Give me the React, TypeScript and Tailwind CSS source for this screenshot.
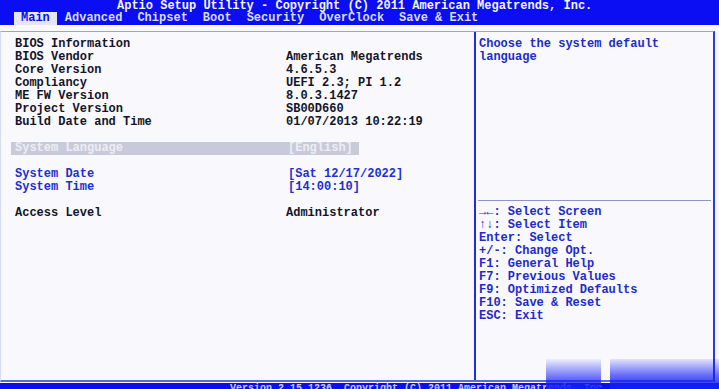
import React from "react";

const info: [string, string][] = [
  ["BIOS Information", ""],
  ["BIOS Vendor", "American Megatrends"],
  ["Core Version", "4.6.5.3"],
  ["Compliancy", "UEFI 2.3; PI 1.2"],
  ["ME FW Version", "8.0.3.1427"],
  ["Project Version", "SB00D660"],
  ["Build Date and Time", "01/07/2013 10:22:19"],
];

const keys = [
  "→←: Select Screen",
  "↑↓: Select Item",
  "Enter: Select",
  "+/-: Change Opt.",
  "F1: General Help",
  "F7: Previous Values",
  "F9: Optimized Defaults",
  "F10: Save & Reset",
  "ESC: Exit",
];

const tabs = ["Advanced", "Chipset", "Boot", "Security", "OverClock", "Save & Exit"];

function Row({ label, value, cls = "text-[#141428]" }: { label: string; value: string; cls?: string }) {
  return (
    <div className={`flex h-[13px] leading-[13px] whitespace-pre ${cls}`}>
      <div className="w-[271px]">{label}</div>
      <div>{value}</div>
    </div>
  );
}

export default function App() {
  return (
    <div
      className="relative w-[719px] h-[389px] overflow-hidden bg-[#f9f9fd] text-[12px] font-bold"
      style={{ fontFamily: '"Liberation Mono", "DejaVu Sans Mono", monospace' }}
    >
      {/* header */}
      <div className="h-[25px] bg-[#0b0df3] text-white">
        <div className="h-[12px] leading-[12px] pl-[117px] whitespace-pre text-[#f4f4ff]">
          Aptio Setup Utility - Copyright (C) 2011 American Megatrends, Inc.
        </div>
        <div className="h-[13px] leading-[13px] flex pl-[14px] whitespace-pre">
          <div className="bg-[#e4e6f2] text-[#0b0df3] px-[7px] h-[13px]">Main</div>
          <div className="flex gap-[15px] pl-[8px] text-[#d8dcff]">
            {tabs.map((t) => (
              <span key={t}>{t}</span>
            ))}
          </div>
        </div>
      </div>

      {/* main box */}
      <div className="mt-[6px] mr-[4px] h-[351px] flex border-t border-b-2 border-r-2 border-t-[#9aa2d8] border-b-[#5a68d8] border-r-[#2a3ae0] border-l border-l-[#d8dcf0]">
        <div className="w-[473px] pl-[14px] pt-[6px]">
          {info.map(([l, v]) => (
            <Row key={l} label={l} value={v} />
          ))}
          <div className="h-[13px]" />
          <div className="flex h-[13px] leading-[13px] -ml-[4px] pl-[4px] w-[348px] bg-[#c9cad9] text-[#ededf4] whitespace-pre">
            <div className="w-[271px]">System Language</div>
            <div className="pl-[2px]">[English]</div>
          </div>
          <div className="h-[13px]" />
          <div className="flex h-[13px] leading-[13px] whitespace-pre text-[#1d2fd4]">
            <div className="w-[271px]">System Date</div>
            <div className="pl-[2px]">[Sat 12/17/2022]</div>
          </div>
          <div className="flex h-[13px] leading-[13px] whitespace-pre text-[#1d2fd4]">
            <div className="w-[271px]">System Time</div>
            <div className="pl-[2px]">[14:00:10]</div>
          </div>
          <div className="h-[13px]" />
          <Row label="Access Level" value="Administrator" />
        </div>
        <div className="flex-1 border-l-2 border-l-[#1f2ee6] text-[#1d2bcc]">
          <div className="h-[168px] pl-[3px] pt-[6px]">
            <div className="h-[13px] leading-[13px]">Choose the system default</div>
            <div className="h-[13px] leading-[13px]">language</div>
          </div>
          <div className="mx-[2px] h-[1px] bg-[#8e96c8]" />
          <div className="pl-[3px] pt-[5px]">
            {keys.map((k) => (
              <div key={k} className="h-[13px] leading-[13px] whitespace-pre">
                {k}
              </div>
            ))}
          </div>
        </div>
      </div>

      {/* bottom bar */}
      <div className="mt-[1px] h-[7px] bg-[#0b0df3] overflow-hidden">
        <div className="pl-[230px] leading-[12px] text-[10px] text-[#c8ccff] whitespace-pre">
          Version 2.15.1236. Copyright (C) 2011 American Megatrends, Inc.
        </div>
      </div>

      {/* glare overlay bottom right */}
      <div
        className="absolute left-[546px] bottom-0 w-[55px] h-[30px] pointer-events-none"
        style={{
          background:
            "linear-gradient(to bottom, rgba(20,30,245,0.05) 0%, rgba(20,30,245,0.6) 60%, rgba(20,30,245,0.95) 100%)",
        }}
      />
      <div
        className="absolute left-[610px] bottom-0 w-[109px] h-[30px] pointer-events-none"
        style={{
          background:
            "linear-gradient(to bottom, rgba(20,30,245,0.1) 0%, rgba(20,30,245,0.65) 55%, rgba(20,30,245,0.95) 100%)",
        }}
      />
    </div>
  );
}
